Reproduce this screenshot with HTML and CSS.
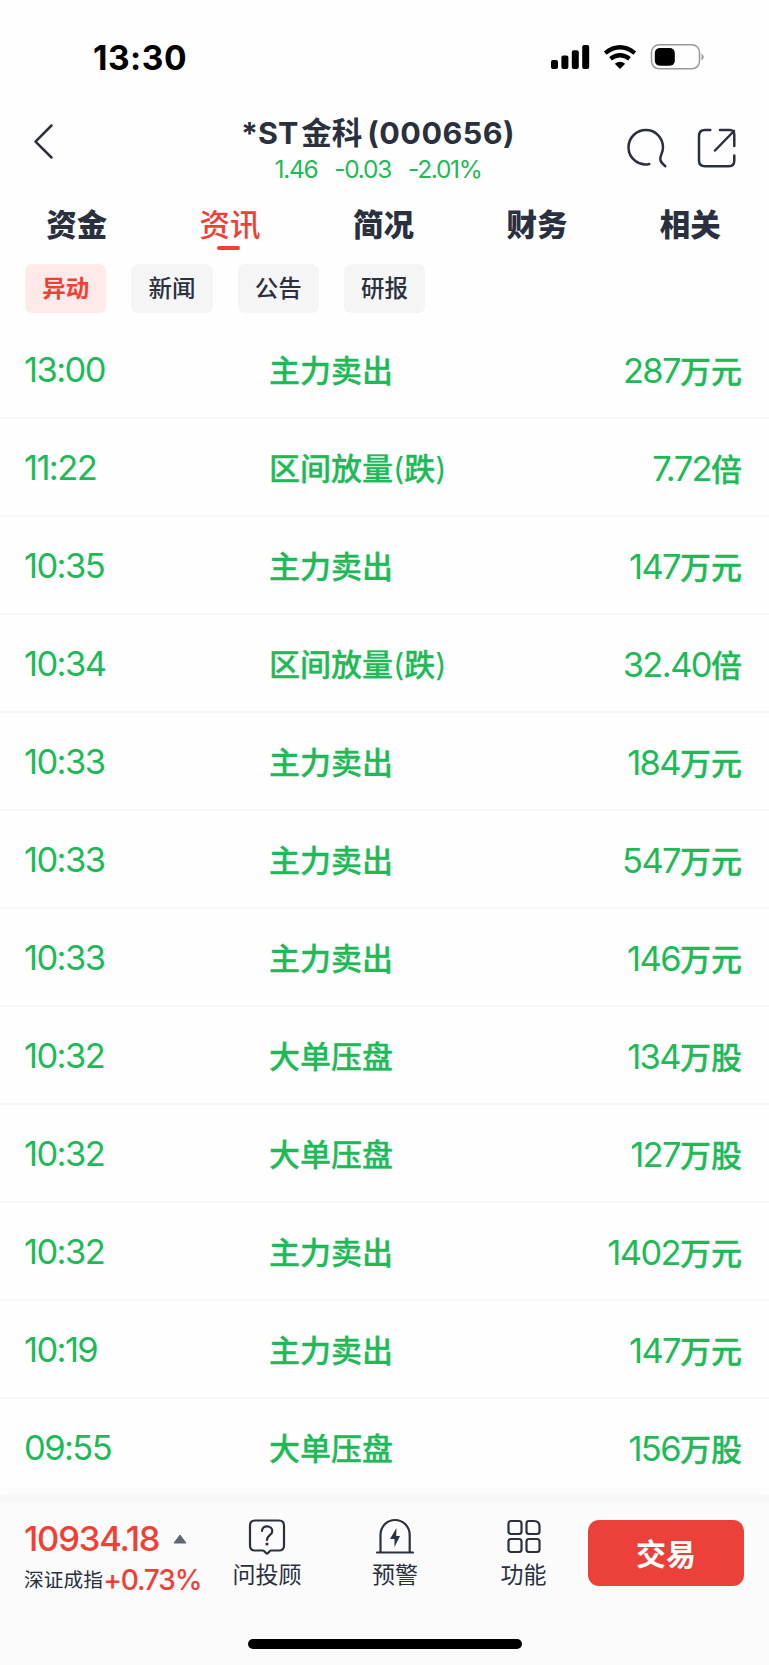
FILE: index.html
```html
<!DOCTYPE html>
<html lang="zh-CN">
<head>
<meta charset="utf-8">
<title>*ST金科 (000656)</title>
<link rel="stylesheet" href="styles.css">
</head>
<body>
<div class="screen">
  <div class="status">
    <span class="clock">13:30</span>
    <svg class="status-icons" width="156" height="30" viewBox="0 0 156 30">
      <g><rect x="0" y="17" width="7" height="9" rx="2"/><rect x="10.4" y="12.4" width="7" height="13.6" rx="2"/><rect x="20.8" y="7.3" width="7" height="18.7" rx="2"/><rect x="31.2" y="2" width="7" height="24" rx="2"/></g>
      <g fill="none" stroke="#000" stroke-width="4.3"><path d="M54.2 10.1Q69 -1.6 83.8 10.1"/><path d="M59.5 15.8Q69 8.6 78.500 15.8"/></g>
      <path d="M69 26L63.800 20.700Q69 16.700 74.200 20.700Z"/>
      <rect x="100.500" y="1.800" width="48" height="24" rx="7.500" fill="none" stroke="#999" stroke-width="1.5"/>
      <rect x="103.800" y="5" width="20" height="17.700" rx="5"/>
      <path d="M150.500 10.500Q155 14 150.500 17.500Z" fill="#999"/>
    </svg>
  </div>
  <header class="header">
    <svg class="back" width="24" height="40" viewBox="0 0 24 40"><path d="M19.500 4.500L3.500 20.700L19.500 36.500"/></svg>
    <div class="heading">
      <h1 class="title"><span>*ST</span><span class="name">金科</span><span class="code">(000656)</span></h1>
      <div class="quote"><span>1.46</span><span>-0.03</span><span>-2.01%</span></div>
    </div>
    <svg class="tools" width="112" height="42" viewBox="0 0 112 42">
      <path d="M22.300 37C13 39.500 1.500 32 1.500 20.500C1.500 10.500 9.500 3 19 3C28.500 3 36 10.800 36 20.500C36 25.500 33.600 27.500 33.300 31.500C33.100 35 35 36.500 38.300 39.200"/>
      <path d="M83.300 3H78Q72 3 72 9V33.500Q72 39.200 78 39.200H102Q107.300 39.200 107.300 33.500V28.500M93 3H103Q107.300 3 107.300 8V19M88 23.500L107 4"/>
    </svg>
  </header>
  <nav class="tabs">
    <span class="tab">资金</span><span class="tab active">资讯</span><span class="tab">简况</span><span class="tab">财务</span><span class="tab">相关</span>
  </nav>
  <div class="chips">
    <span class="chip selected">异动</span><span class="chip">新闻</span><span class="chip">公告</span><span class="chip">研报</span>
  </div>
  <main class="list">
    <div class="row"><span class="time">13:00</span><span class="event">主力卖出</span><span class="value"><b>287</b>万元</span></div>
    <div class="row"><span class="time">11:22</span><span class="event">区间放量<i>(</i>跌<i>)</i></span><span class="value"><b>7.72</b>倍</span></div>
    <div class="row"><span class="time">10:35</span><span class="event">主力卖出</span><span class="value"><b>147</b>万元</span></div>
    <div class="row"><span class="time">10:34</span><span class="event">区间放量<i>(</i>跌<i>)</i></span><span class="value"><b>32.40</b>倍</span></div>
    <div class="row"><span class="time">10:33</span><span class="event">主力卖出</span><span class="value"><b>184</b>万元</span></div>
    <div class="row"><span class="time">10:33</span><span class="event">主力卖出</span><span class="value"><b>547</b>万元</span></div>
    <div class="row"><span class="time">10:33</span><span class="event">主力卖出</span><span class="value"><b>146</b>万元</span></div>
    <div class="row"><span class="time">10:32</span><span class="event">大单压盘</span><span class="value"><b>134</b>万股</span></div>
    <div class="row"><span class="time">10:32</span><span class="event">大单压盘</span><span class="value"><b>127</b>万股</span></div>
    <div class="row"><span class="time">10:32</span><span class="event">主力卖出</span><span class="value"><b>1402</b>万元</span></div>
    <div class="row"><span class="time">10:19</span><span class="event">主力卖出</span><span class="value"><b>147</b>万元</span></div>
    <div class="row"><span class="time">09:55</span><span class="event">大单压盘</span><span class="value"><b>156</b>万股</span></div>
  </main>
  <footer class="footer">
    <div class="actions">
      <div class="index">
        <div class="index-value">10934.18<svg width="14" height="10" viewBox="0 0 14 10"><path d="M7 1L13 9H1Z" fill="#606674" stroke="#606674" stroke-linejoin="round"/></svg></div>
        <div class="index-name">深证成指<span>+0.73%</span></div>
      </div>
      <div class="action">
        <svg width="40" height="40" viewBox="0 0 40 40"><path d="M8 2.500H32Q37 2.500 37 7.500V27.500Q37 32.500 32 32.500H24Q23 32.500 22.500 33.500L20.500 35.500H19.500L17.500 33.500Q17 32.500 16 32.500H8Q3 32.500 3 27.500V7.500Q3 2.500 8 2.500Z"/><path d="M15 13C15 6.500 25.300 7 25.300 13C25.300 17.500 20 17 20 22"/><circle cx="20" cy="26" r="1.600" class="solid"/></svg>
        <span>问投顾</span>
      </div>
      <div class="action">
        <svg width="40" height="40" viewBox="0 0 40 40"><path d="M2 34.500H38M5.500 34.500V17C5.500 8.500 12 2 20 2S34.700 8.500 34.700 17V34.500"/><path class="solid" d="M21.500 10L15 21H19.500V29L25 18H21.200Z"/></svg>
        <span>预警</span>
      </div>
      <div class="action">
        <svg width="40" height="40" viewBox="0 0 40 40"><rect x="4.500" y="3" width="13" height="13" rx="2.500"/><path d="M25 3H30Q35.500 3 35.500 8.500V13.500Q35.500 16 33 16H25Q22.500 16 22.500 13.500V5.500Q22.500 3 25 3Z"/><rect x="4.500" y="21" width="13" height="13" rx="2.500"/><rect x="22.500" y="21" width="13" height="13" rx="2.500"/></svg>
        <span>功能</span>
      </div>
      <div class="trade">交易</div>
    </div>
    <div class="home"></div>
  </footer>
</div>
</body>
</html>
```

FILE: styles.css
```css
* { box-sizing: border-box; }
body { margin: 0; background: #fefefe; color: #2a303e; font-family: Inter, "Noto Sans CJK SC", sans-serif; }
.screen { width: 769px; height: 1665px; display: flex; flex-direction: column; overflow: hidden; }
svg { display: block; }

.status { height: 104px; display: flex; justify-content: space-between; padding: 43px 62px 0 93px; }
.clock { font-size: 33.500px; line-height: 31px; font-weight: 700; color: #000; letter-spacing: .5px; }

.header { height: 92px; display: grid; grid-template-columns: 150px 1fr 150px; }
.back { margin: 17px 0 0 32px; }
.back path, .tools path { fill: none; stroke: #2a303e; stroke-width: 2.5; stroke-linecap: round; stroke-linejoin: round; }
.tools { margin: 23px 0 0 8px; }
.heading { display: flex; flex-direction: column; align-items: center; padding-right: 13px; }
.title { margin: 10px 0 0; height: 38px; display: flex; font-size: 30.500px; line-height: 38px; font-weight: 700; }
.name { margin: 0 5px 0 3px; font-size: 30.500px; }
.code { letter-spacing: .5px; }
.quote { height: 36px; display: flex; gap: 17px; font-size: 24.500px; line-height: 34px; color: #1eba58; letter-spacing: -1.300px; }

.tabs { height: 56px; display: grid; grid-template-columns: repeat(5, 1fr); padding: 7px 2px 0 0; text-align: center; }
.tab { font-size: 30.500px; line-height: 43px; font-weight: 800; display: flex; flex-direction: column; align-items: center; }
.active { font-weight: 500; color: #f04036; }
.active::after { content: ""; width: 23px; height: 4px; border-radius: 2px; background: #f04036; margin: 0 3px 0 0; }

.chips { height: 69px; display: flex; gap: 25px; padding: 12px 25px 0; }
.chip { width: 81.300px; height: 49px; border-radius: 7px; background: #f5f5f6; font-size: 23.500px; line-height: 50px; font-weight: 500; text-align: center; }
.selected { background: #ffeaea; color: #f04036; font-weight: 700; }

.list { flex: 1; min-height: 0; overflow: hidden; }
.row { height: 98px; display: grid; grid-template-columns: 245px 1fr 1fr; align-items: center; padding: 2px 27px 0 24px; border-bottom: 2px solid #f8f8f9; color: #1eba58; font-size: 31px; font-weight: 500; -webkit-text-stroke: .3px #1eba58; }
.time, .value b { font-size: 34.500px; font-weight: 400; letter-spacing: -1.600px; line-height: 44px; -webkit-text-stroke: 0; }
.event { padding-bottom: 3px; }
.event i { font-style: normal; font-weight: 400; -webkit-text-stroke: 0; }
.value { text-align: right; }

.footer { height: 170px; background: #fbfbfb; border-top: 7px solid #f7f7f7; box-shadow: 0 0 16px rgba(0, 0, 0, .035); position: relative; }
.actions { height: 137px; display: grid; grid-template-columns: 203px 128px 128px 129px 156px; padding-top: 16px; }
.index { padding-left: 24px; white-space: nowrap; }
.index-value { display: flex; align-items: center; gap: 14px; color: #f04036; font-size: 34.500px; font-weight: 500; line-height: 42px; letter-spacing: -1.200px; }
.index-name { display: flex; align-items: center; font-size: 19.800px; line-height: 41px; }
.index-name span { color: #f04036; font-size: 28px; font-weight: 500; letter-spacing: -1.100px; }
.action { display: flex; flex-direction: column; align-items: center; font-size: 23px; line-height: 34px; }
.action svg { fill: none; stroke: #2a303e; stroke-width: 2.2; stroke-linecap: round; stroke-linejoin: round; }
.action .solid { fill: #2a303e; stroke: none; }
.trade { height: 66px; margin-top: 2px; border-radius: 11px; background: #ec413a; color: #fff; font-size: 30px; line-height: 68px; font-weight: 700; text-align: center; }
.home { width: 274px; height: 10px; margin: 0 auto; border-radius: 5px; background: #000; }
```
